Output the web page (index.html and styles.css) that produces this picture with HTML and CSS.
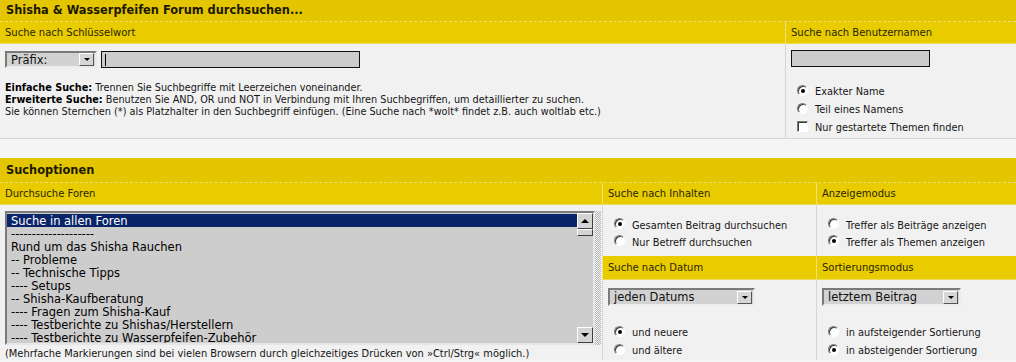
FILE: index.html
```html
<!DOCTYPE html>
<html lang="de">
<head>
    <meta charset="UTF-8">
    <meta name="viewport" content="width=device-width, initial-scale=1.0">
    <title>Shisha &amp; Wasserpfeifen Forum durchsuchen</title>
    <link rel="stylesheet" href="styles.css">
</head>
<body>

<div class="panel">
    <div class="panel-title">Shisha &amp; Wasserpfeifen Forum durchsuchen...</div>
    <div class="row">
        <div class="cell keyword">
            <div class="cell-head">Suche nach Schlüsselwort</div>
            <div class="cell-body top-body keyword-body">
                <div class="field-line">
                    <div class="select prefix"><span>Präfix:</span><span class="arrow"></span></div>
                    <div class="textbox wide"><span class="caret"></span></div>
                </div>
                <p class="hint">
                    <strong>Einfache Suche:</strong> Trennen Sie Suchbegriffe mit Leerzeichen voneinander.<br>
                    <strong>Erweiterte Suche:</strong> Benutzen Sie AND, OR und NOT in Verbindung mit Ihren Suchbegriffen, um detaillierter zu suchen.<br>
                    Sie können Sternchen (*) als Platzhalter in den Suchbegriff einfügen. (Eine Suche nach *wolt* findet z.B. auch woltlab etc.)
                </p>
            </div>
        </div>
        <div class="cell user">
            <div class="cell-head">Suche nach Benutzernamen</div>
            <div class="cell-body top-body user-body">
                <div class="textbox short"></div>
                <ul class="choices roomy">
                    <li><span class="radio on"></span>Exakter Name</li>
                    <li><span class="radio"></span>Teil eines Namens</li>
                    <li><span class="check"></span>Nur gestartete Themen finden</li>
                </ul>
            </div>
        </div>
    </div>
</div>

<div class="panel options-panel">
    <div class="panel-title">Suchoptionen</div>
    <div class="row">
        <div class="cell forums">
            <div class="cell-head">Durchsuche Foren</div>
            <div class="cell-body forum-body">
                <div class="listwrap">
                    <div class="listbox">
                        <ul class="items">
                            <li class="selected">Suche in allen Foren</li>
                            <li>--------------------</li>
                            <li>Rund um das Shisha Rauchen</li>
                            <li>-- Probleme</li>
                            <li>-- Technische Tipps</li>
                            <li>---- Setups</li>
                            <li>-- Shisha-Kaufberatung</li>
                            <li>---- Fragen zum Shisha-Kauf</li>
                            <li>---- Testberichte zu Shishas/Herstellern</li>
                            <li>---- Testberichte zu Wasserpfeifen-Zubehör</li>
                        </ul>
                        <div class="scrollbar">
                            <span class="sb-btn up"></span>
                            <span class="sb-thumb"></span>
                            <span class="sb-track"></span>
                            <span class="sb-btn down"></span>
                        </div>
                    </div>
                    <div class="hatch"></div>
                </div>
                <p class="note">(Mehrfache Markierungen sind bei vielen Browsern durch gleichzeitiges Drücken von »Ctrl/Strg« möglich.)</p>
            </div>
        </div>

        <div class="cell mid">
            <div class="cell-head">Suche nach Inhalten</div>
            <div class="cell-body first-body">
                <ul class="choices">
                    <li><span class="radio on"></span>Gesamten Beitrag durchsuchen</li>
                    <li><span class="radio"></span>Nur Betreff durchsuchen</li>
                </ul>
            </div>
            <div class="cell-head second">Suche nach Datum</div>
            <div class="cell-body last-body">
                <div class="select date"><span>jeden Datums</span><span class="arrow"></span></div>
                <ul class="choices roomy spaced">
                    <li><span class="radio on"></span>und neuere</li>
                    <li><span class="radio"></span>und ältere</li>
                </ul>
            </div>
        </div>

        <div class="cell side">
            <div class="cell-head">Anzeigemodus</div>
            <div class="cell-body first-body">
                <ul class="choices">
                    <li><span class="radio"></span>Treffer als Beiträge anzeigen</li>
                    <li><span class="radio on"></span>Treffer als Themen anzeigen</li>
                </ul>
            </div>
            <div class="cell-head second">Sortierungsmodus</div>
            <div class="cell-body last-body">
                <div class="select sort"><span>letztem Beitrag</span><span class="arrow"></span></div>
                <ul class="choices roomy spaced">
                    <li><span class="radio"></span>in aufsteigender Sortierung</li>
                    <li><span class="radio on"></span>in absteigender Sortierung</li>
                </ul>
            </div>
        </div>
    </div>
</div>

</body>
</html>
```

FILE: styles.css
```css
body {
    margin: 0;
    background-color: #f5f5f5;
    font-family: "DejaVu Sans", Verdana, sans-serif;
    font-size: 9.7px;
    color: #151515;
}

.panel {
    background-color: #f1f1f1;
}

.panel-title {
    height: 21px;
    line-height: 21px;
    padding-left: 6px;
    background-color: #e4c600;
    border-bottom: 1px dashed #f1de6e;
    font-size: 11.4px;
    font-weight: bold;
    color: #1c1800;
}

.options-panel {
    margin-top: 19px;
}

.options-panel .panel-title {
    height: 24px;
    line-height: 25px;
}

.row {
    display: flex;
}

.cell {
    display: flex;
    flex-direction: column;
}

.keyword { width: 785px; }
.user { flex: 1; }
.forums { width: 602px; }
.mid { width: 214px; }
.side { flex: 1; }

.cell-head {
    height: 21px;
    line-height: 21px;
    padding-left: 5px;
    background-color: #e8cc00;
    border-bottom: 1px solid #efdb5c;
    font-size: 10px;
    color: #2a2400;
}

.cell-head.second {
    height: 23px;
    line-height: 24px;
}

.cell + .cell .cell-head {
    border-left: 1px solid #f2e27a;
}

.cell + .cell .cell-body {
    border-left: 1px solid #d5d5d5;
}

.cell-body {
    padding-left: 5px;
}

.top-body {
    height: 94px;
    border-bottom: 1px solid #d5d5d5;
}

.keyword-body { padding-top: 7px; height: 87px; }
.user-body { padding-top: 6px; height: 88px; }

.field-line {
    display: flex;
    gap: 4px;
}

/* form controls */
.select {
    display: flex;
    align-items: center;
    justify-content: space-between;
    box-sizing: border-box;
    height: 17px;
    padding: 0 1px 0 4px;
    border: 2px solid;
    border-color: #7a7a7a #ececec #ececec #7a7a7a;
    background-color: #d2d2d2;
    font-size: 11.5px;
    color: #111;
}

.select.prefix { width: 92px; }
.select.date { width: 147px; height: 18px; }
.select.sort { width: 139px; height: 18px; }

.arrow {
    display: flex;
    align-items: center;
    justify-content: center;
    box-sizing: border-box;
    width: 15px;
    height: 13px;
    background-color: #d6d6d6;
    border: 1px solid;
    border-color: #fff #555 #555 #fff;
}

.arrow::after {
    content: "";
    border-left: 3px solid transparent;
    border-right: 3px solid transparent;
    border-top: 3px solid #000;
}

.textbox {
    display: flex;
    align-items: center;
    box-sizing: border-box;
    height: 17px;
    background-color: #cccccc;
    border: 1px solid #111;
}

.textbox.wide { width: 259px; }
.textbox.short { width: 139px; }

.caret {
    width: 1px;
    height: 12px;
    margin-left: 3px;
    background-color: #000;
}

.hint {
    margin: 14px 0 0;
    line-height: 12px;
}

.hint strong {
    color: #000;
}

.choices {
    list-style: none;
    margin: 0;
    padding: 0 0 0 6px;
}

.choices li {
    display: flex;
    align-items: flex-start;
    height: 17px;
    line-height: 17px;
    font-size: 9.8px;
    white-space: nowrap;
}

.choices.roomy li {
    height: 18px;
    line-height: 18px;
}

.user-body .choices { margin-top: 16px; }
.choices.spaced { margin-top: 18px; }

.radio,
.check {
    flex: none;
    box-sizing: border-box;
    width: 11px;
    height: 11px;
    margin: 1px 7px 0 0;
    background-color: #fff;
    border: 1px solid;
    border-color: #7a7a7a #fff #fff #7a7a7a;
    box-shadow: inset 1px 1px 0 #3a3a3a;
    display: flex;
    align-items: center;
    justify-content: center;
}

.roomy .radio,
.roomy .check {
    margin-top: 2px;
}

.radio {
    border-radius: 50%;
}

.radio.on::after {
    content: "";
    width: 4px;
    height: 4px;
    border-radius: 50%;
    background-color: #000;
}

.first-body {
    height: 39px;
    padding-top: 12px;
}

.last-body {
    flex: 1;
    padding-top: 8px;
}

/* forum list */
.forum-body {
    flex: 1;
    padding-top: 6px;
}

.listwrap {
    display: flex;
}

.listbox {
    display: flex;
    box-sizing: border-box;
    width: 590px;
    height: 134px;
    border: 2px solid;
    border-color: #7a7a7a #e6e6e6 #e6e6e6 #7a7a7a;
    background-color: #cdcdcd;
    font-size: 11.5px;
    overflow: hidden;
}

.items {
    flex: 1;
    list-style: none;
    margin: 0;
    padding: 1px 0 0;
}

.items li {
    height: 13px;
    line-height: 14px;
    padding-left: 4px;
    white-space: nowrap;
    color: #000;
}

.items li.selected {
    background-color: #0a246a;
    color: #fff;
}

.scrollbar {
    display: flex;
    flex-direction: column;
    width: 16px;
}

.sb-btn,
.sb-thumb {
    display: flex;
    align-items: center;
    justify-content: center;
    box-sizing: border-box;
    background-color: #d4d4d4;
    border: 1px solid;
    border-color: #fff #404040 #404040 #fff;
}

.sb-btn {
    height: 16px;
}

.sb-thumb {
    height: 7px;
}

.sb-track {
    flex: 1;
}

.sb-btn.up::after {
    content: "";
    border-left: 4px solid transparent;
    border-right: 4px solid transparent;
    border-bottom: 4px solid #000;
}

.sb-btn.down::after {
    content: "";
    border-left: 4px solid transparent;
    border-right: 4px solid transparent;
    border-top: 4px solid #000;
}

.hatch {
    width: 6px;
    height: 134px;
    background: repeating-conic-gradient(#b4b4b4 0 25%, #f2f2f2 0 50%) 0 0 / 2px 2px;
}

.note {
    margin: 3px 0 0;
    line-height: 12px;
    font-size: 9.9px;
}
```
